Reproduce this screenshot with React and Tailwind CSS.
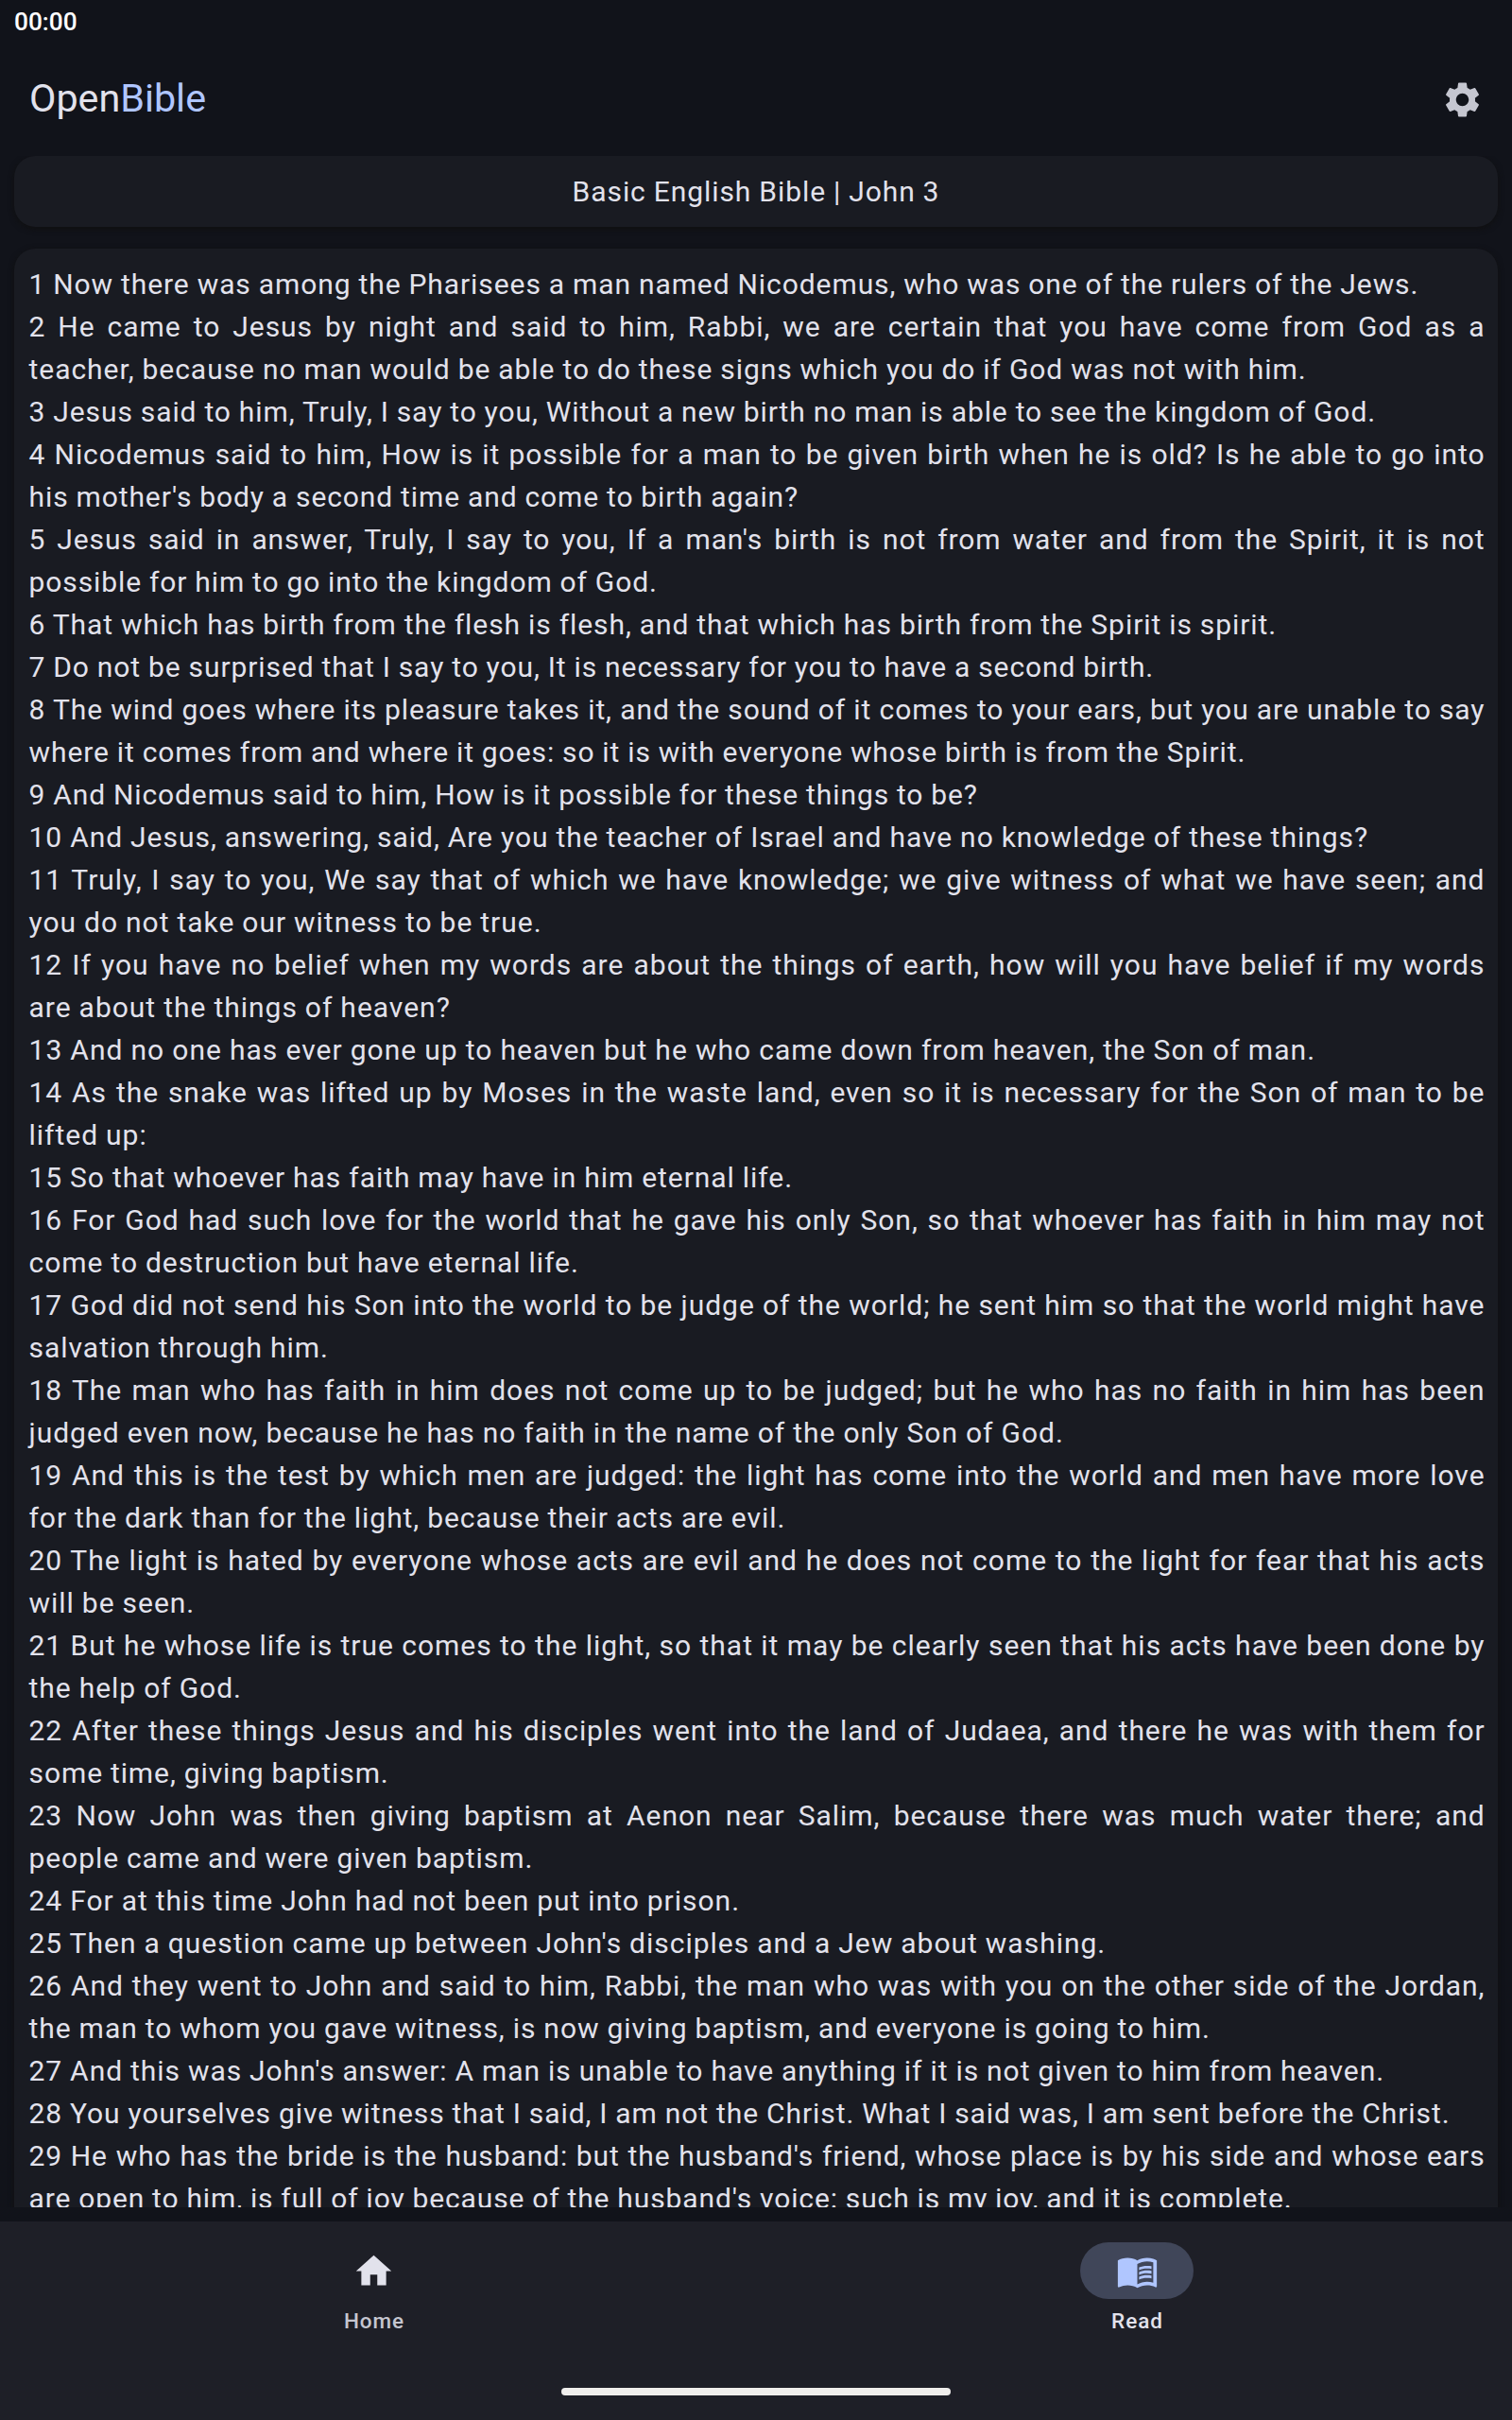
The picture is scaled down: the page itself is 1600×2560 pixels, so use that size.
import React from "react";
import { MdHome, MdMenuBook, MdSettings } from "react-icons/md";

// Each verse: text and its letter spacing in pixels.
const verses = [
  ["Now there was among the Pharisees a man named Nicodemus, who was one of the rulers of the Jews.", 0.93],
  ["He came to Jesus by night and said to him, Rabbi, we are certain that you have come from God as a teacher, because no man would be able to do these signs which you do if God was not with him.", 0.955],
  ["Jesus said to him, Truly, I say to you, Without a new birth no man is able to see the kingdom of God.", 0.924],
  ["Nicodemus said to him, How is it possible for a man to be given birth when he is old? Is he able to go into his mother's body a second time and come to birth again?", 0.908],
  ["Jesus said in answer, Truly, I say to you, If a man's birth is not from water and from the Spirit, it is not possible for him to go into the kingdom of God.", 0.907],
  ["That which has birth from the flesh is flesh, and that which has birth from the Spirit is spirit.", 0.94],
  ["Do not be surprised that I say to you, It is necessary for you to have a second birth.", 0.924],
  ["The wind goes where its pleasure takes it, and the sound of it comes to your ears, but you are unable to say where it comes from and where it goes: so it is with everyone whose birth is from the Spirit.", 0.923],
  ["And Nicodemus said to him, How is it possible for these things to be?", 0.907],
  ["And Jesus, answering, said, Are you the teacher of Israel and have no knowledge of these things?", 0.968],
  ["Truly, I say to you, We say that of which we have knowledge; we give witness of what we have seen; and you do not take our witness to be true.", 0.98],
  ["If you have no belief when my words are about the things of earth, how will you have belief if my words are about the things of heaven?", 0.99],
  ["And no one has ever gone up to heaven but he who came down from heaven, the Son of man.", 1.028],
  ["As the snake was lifted up by Moses in the waste land, even so it is necessary for the Son of man to be lifted up:", 0.98],
  ["So that whoever has faith may have in him eternal life.", 0.954],
  ["For God had such love for the world that he gave his only Son, so that whoever has faith in him may not come to destruction but have eternal life.", 0.97],
  ["God did not send his Son into the world to be judge of the world; he sent him so that the world might have salvation through him.", 0.98],
  ["The man who has faith in him does not come up to be judged; but he who has no faith in him has been judged even now, because he has no faith in the name of the only Son of God.", 0.985],
  ["And this is the test by which men are judged: the light has come into the world and men have more love for the dark than for the light, because their acts are evil.", 0.945],
  ["The light is hated by everyone whose acts are evil and he does not come to the light for fear that his acts will be seen.", 0.98],
  ["But he whose life is true comes to the light, so that it may be clearly seen that his acts have been done by the help of God.", 0.98],
  ["After these things Jesus and his disciples went into the land of Judaea, and there he was with them for some time, giving baptism.", 0.92],
  ["Now John was then giving baptism at Aenon near Salim, because there was much water there; and people\u00a0came and were given baptism.", 0.935],
  ["For at this time John had not been put into prison.", 0.987],
  ["Then a question came up between John's disciples and a Jew about washing.", 0.988],
  ["And they went to John and said to him, Rabbi, the man who was with you on the other side of the Jordan, the man to whom you gave witness, is now giving baptism, and everyone is going to him.", 0.963],
  ["And this was John's answer: A man is unable to have anything if it is not given to him from heaven.", 0.957],
  ["You yourselves give witness that I said, I am not the Christ. What I said was, I am sent before the Christ.", 0.933],
  ["He who has the bride is the husband: but the husband's friend, whose place is by his side and whose ears are open to him, is full of joy because of the husband's voice: such is my joy, and it is complete.", 0.89],
];

function NavItem({ icon: Icon, label, active }) {
  return (
    <button className="flex w-[791px] flex-col items-center pt-[22px]">
      <span
        className={
          active
            ? "flex h-[60px] w-[120px] items-center justify-center rounded-full bg-[#404659] text-[#b0c6ff]"
            : "flex h-[60px] w-[120px] items-center justify-center rounded-full text-[#e2e2ec]"
        }
      >
        <Icon className="size-[45px]" />
      </span>
      <span
        className={
          active
            ? "mt-[8px] pl-[1px] text-[22.5px] leading-[30px] font-medium tracking-[0.94px] text-[#e2e2ec]"
            : "mt-[8px] pl-[1px] text-[22.5px] leading-[30px] font-medium tracking-[0.94px] text-[#c5c6d0]"
        }
      >
        {label}
      </span>
    </button>
  );
}

export default function App() {
  return (
    <div className="flex h-[2560px] w-[1600px] flex-col overflow-hidden bg-[#11131a] font-[Roboto,sans-serif] text-[#e2e2ec]">
      <div className="flex h-[45px] shrink-0 items-center px-[15px] pt-[3px] text-[26.25px] font-medium text-white">
        00:00
      </div>
      <header className="flex h-[120px] shrink-0 items-center justify-between pr-[30px] pl-[31px]">
        <h1 className="pb-[2px] text-[41.25px] leading-[52.5px]">
          Open<span className="text-[#b0c6ff]">Bible</span>
        </h1>
        <MdSettings className="size-[45px] text-[#c5c6d0]" />
      </header>
      <main className="flex min-h-0 flex-1 flex-col overflow-hidden px-[15px]">
        <div className="flex h-[75px] shrink-0 items-center justify-center rounded-[22.5px] bg-[#191b22] text-[30px] leading-[45px] tracking-[0.9375px] [word-spacing:-0.43px] shadow-[0_2px_6px_rgba(15,15,15,0.9)]">
          Basic English Bible | John 3
        </div>
        <article className="mt-[23px] rounded-t-[22.5px] bg-[#191b22] py-[15px] pr-[13.5px] pl-[15.5px] text-justify text-[30px] leading-[45px] [word-spacing:-0.43px] shadow-[0_2px_6px_rgba(15,15,15,0.9)]">
          {verses.map(([text, spacing], i) => (
            <p key={i} style={{ letterSpacing: `${spacing}px` }}>{`${i + 1} ${text}`}</p>
          ))}
        </article>
      </main>
      <nav className="z-10 mt-[15px] flex h-[210px] shrink-0 flex-col justify-between bg-[#1e1f27]">
        <div className="flex gap-[16.5px]">
          <NavItem icon={MdHome} label="Home" />
          <NavItem icon={MdMenuBook} label="Read" active />
        </div>
        <div className="mb-[26px] h-[8px] w-[412px] self-center rounded-full bg-[#f0eeec]" />
      </nav>
    </div>
  );
}
